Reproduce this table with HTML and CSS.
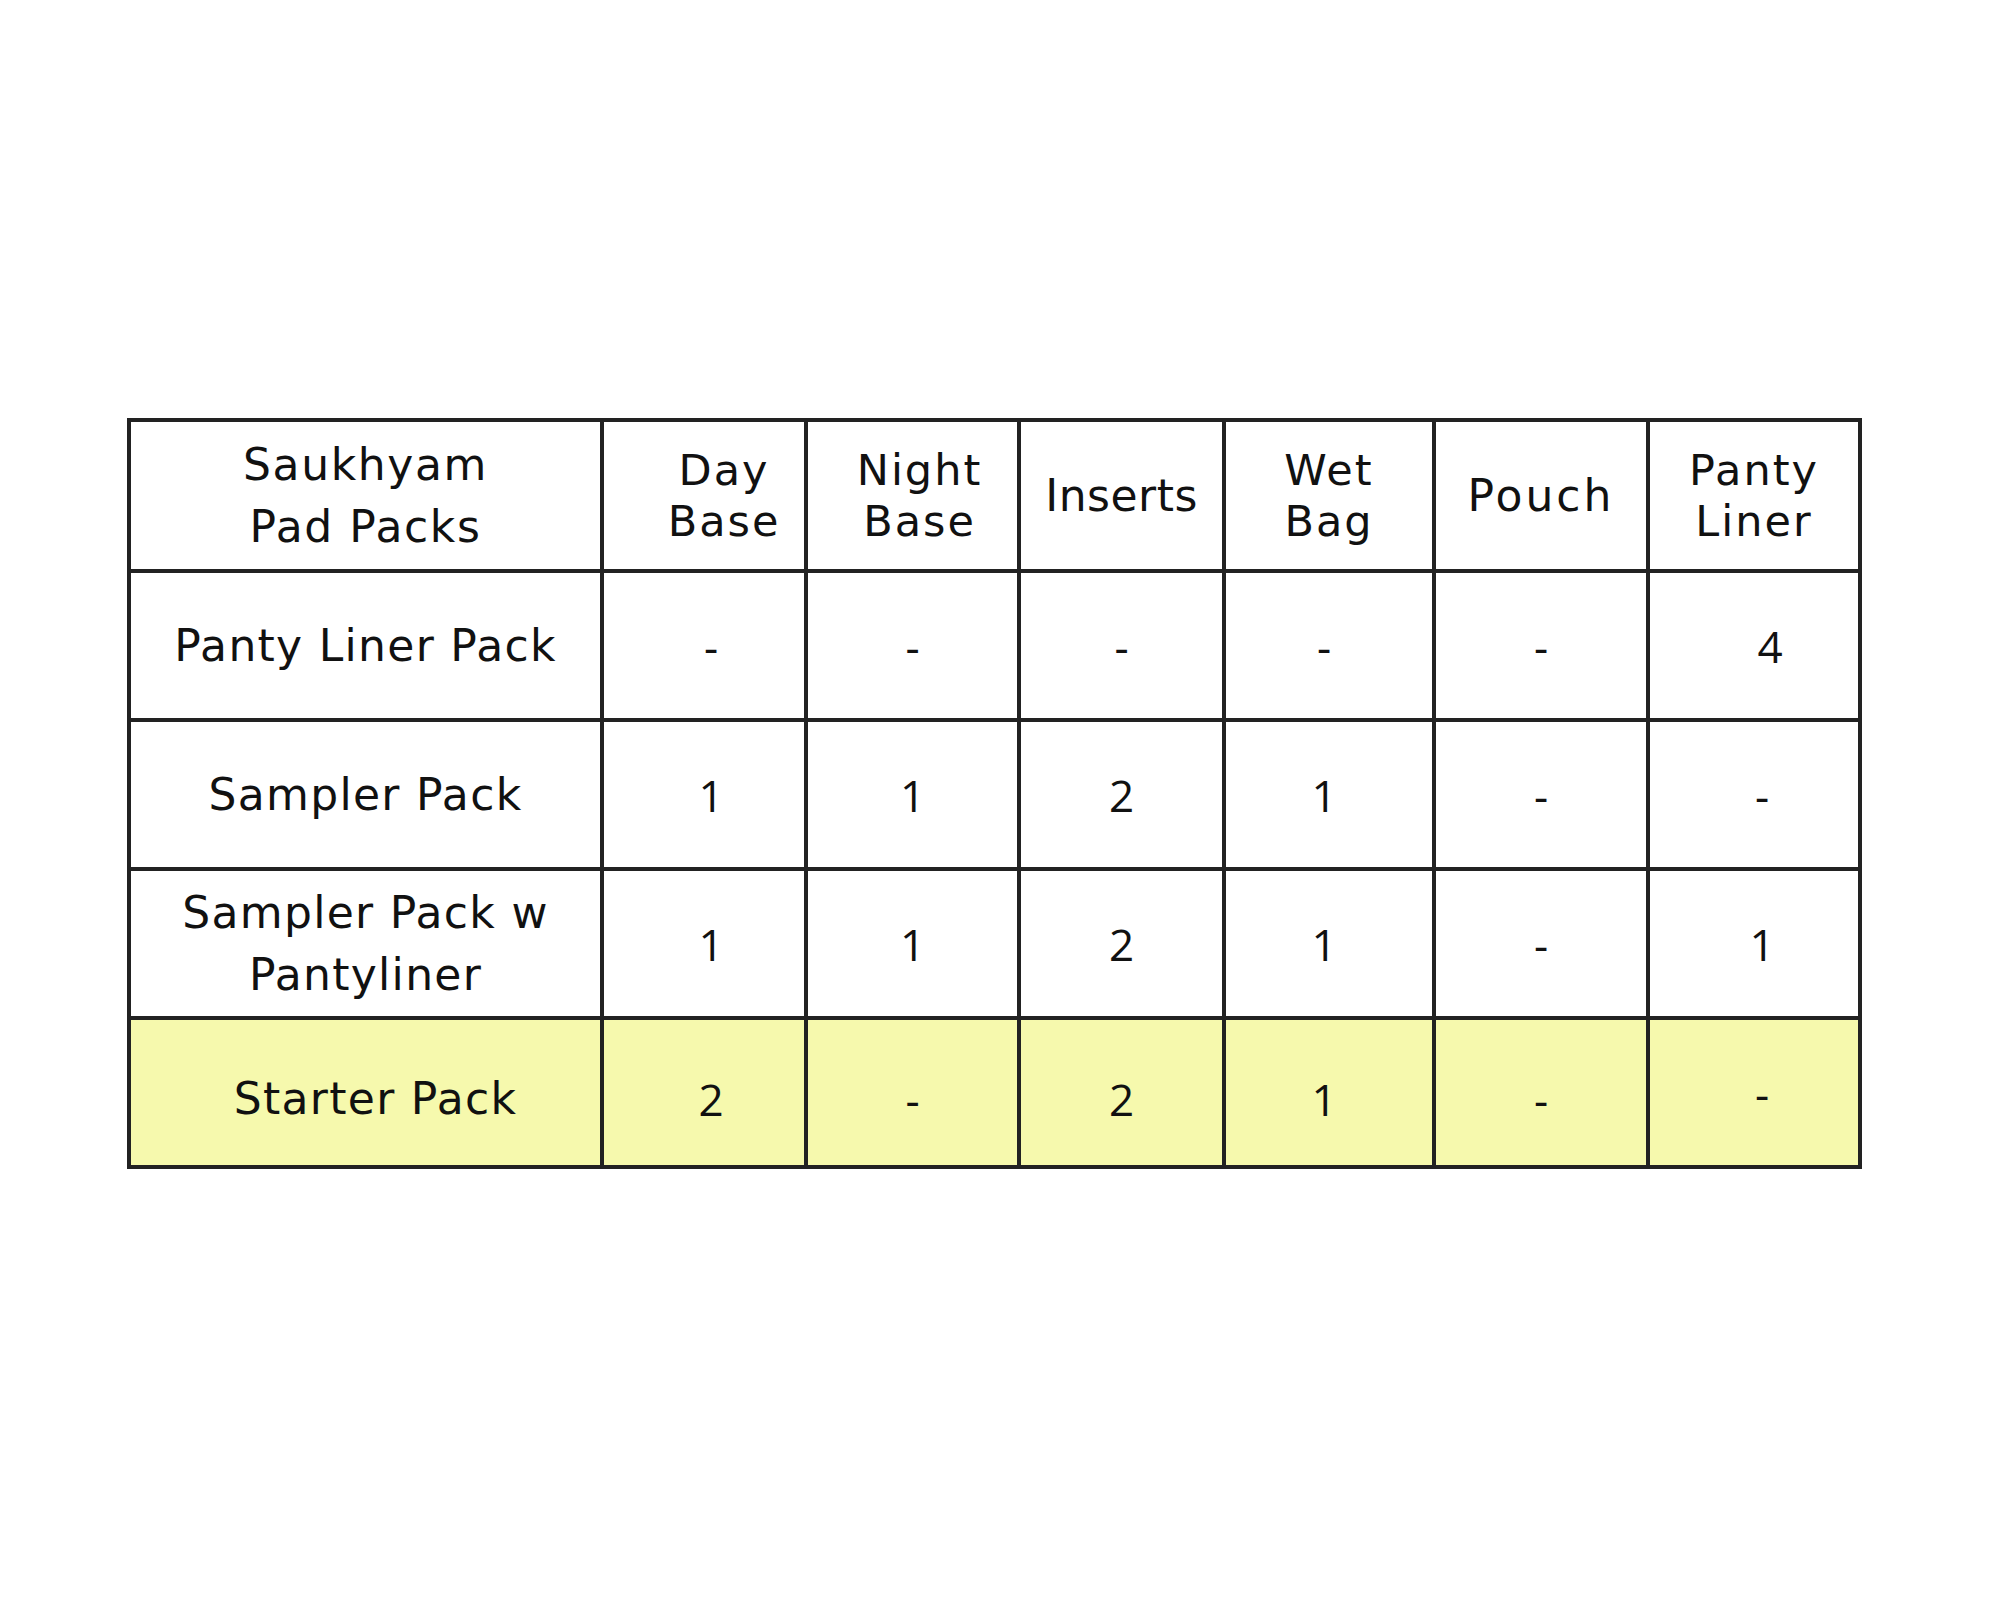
FILE: index.html
```html
<!DOCTYPE html>
<html lang="en">
<head>
<meta charset="utf-8">
<title>Saukhyam Pad Packs</title>
<link rel="stylesheet" href="styles.css">
</head>
<body>
<main class="page">
  <table class="packs">
    <colgroup>
      <col class="c-name">
      <col class="c-day">
      <col class="c-night">
      <col class="c-ins">
      <col class="c-wet">
      <col class="c-pouch">
      <col class="c-liner">
    </colgroup>
    <thead>
      <tr class="head">
        <th class="first">Saukhyam<br>Pad Packs</th>
        <th class="shift-day">Day<br>Base</th>
        <th class="shift-night">Night<br>Base</th>
        <th class="single">Inserts</th>
        <th>Wet<br>Bag</th>
        <th class="single pouch">Pouch</th>
        <th>Panty<br>Liner</th>
      </tr>
    </thead>
    <tbody>
      <tr>
        <td class="name">Panty Liner Pack</td>
        <td class="num col-day">-</td>
        <td class="num">-</td>
        <td class="num">-</td>
        <td class="num col-wet">-</td>
        <td class="num">-</td>
        <td class="num shift-right">4</td>
      </tr>
      <tr>
        <td class="name">Sampler Pack</td>
        <td class="num col-day">1</td>
        <td class="num">1</td>
        <td class="num">2</td>
        <td class="num col-wet">1</td>
        <td class="num">-</td>
        <td class="num col-liner">-</td>
      </tr>
      <tr>
        <td class="name">Sampler Pack w<br>Pantyliner</td>
        <td class="num col-day">1</td>
        <td class="num">1</td>
        <td class="num">2</td>
        <td class="num col-wet">1</td>
        <td class="num">-</td>
        <td class="num col-liner">1</td>
      </tr>
      <tr class="highlight">
        <td class="name starter">Starter Pack</td>
        <td class="num col-day">2</td>
        <td class="num">-</td>
        <td class="num">2</td>
        <td class="num col-wet">1</td>
        <td class="num">-</td>
        <td class="num col-liner raised">-</td>
      </tr>
    </tbody>
  </table>
</main>
</body>
</html>
```

FILE: styles.css
```css
html, body {
  margin: 0;
  padding: 0;
  background: #ffffff;
}

.page {
  padding: 418px 0 0 127px;
}

.packs {
  border-collapse: collapse;
  table-layout: fixed;
  width: 1735px;
  font-family: "DejaVu Sans", "Liberation Sans", sans-serif;
  color: #111111;
}

.c-name { width: 473px; }
.c-day { width: 204px; }
.c-night { width: 213px; }
.c-ins { width: 205px; }
.c-wet { width: 210px; }
.c-pouch { width: 214px; }
.c-liner { width: 212px; }

.packs th,
.packs td {
  border: 4px solid #222222;
  text-align: center;
  vertical-align: middle;
  padding: 0;
  font-weight: normal;
}

.head th {
  height: 147px;
  font-size: 43px;
  line-height: 51px;
  letter-spacing: 2px;
}

.head th.first {
  font-size: 44px;
  line-height: 62px;
  letter-spacing: 1.6px;
}

.head th.single {
  font-size: 44px;
  letter-spacing: 0.5px;
}

.head th.pouch {
  letter-spacing: 3px;
}

.shift-day {
  padding-left: 40px !important;
}

.shift-night {
  padding-left: 14px !important;
}

.packs td {
  height: 145px;
  font-size: 44px;
  line-height: 62px;
  letter-spacing: 1.3px;
}

.packs td.num {
  font-family: "Open Sans", "DejaVu Sans", sans-serif;
  font-size: 44px;
  letter-spacing: 0;
}

.packs td.col-day {
  padding-left: 14px;
}

.packs td.col-wet {
  padding-right: 10px;
}

.packs td.col-liner {
  padding-left: 16px;
}

.shift-right {
  padding-left: 32px !important;
}

.highlight td {
  background: #f6f9ad;
}

.packs .highlight td {
  height: 133px;
  padding-top: 12px;
}

.packs .highlight td.starter {
  padding-left: 20px;
}

.packs .highlight td.raised {
  height: 145px;
  padding-top: 0;
}
```
